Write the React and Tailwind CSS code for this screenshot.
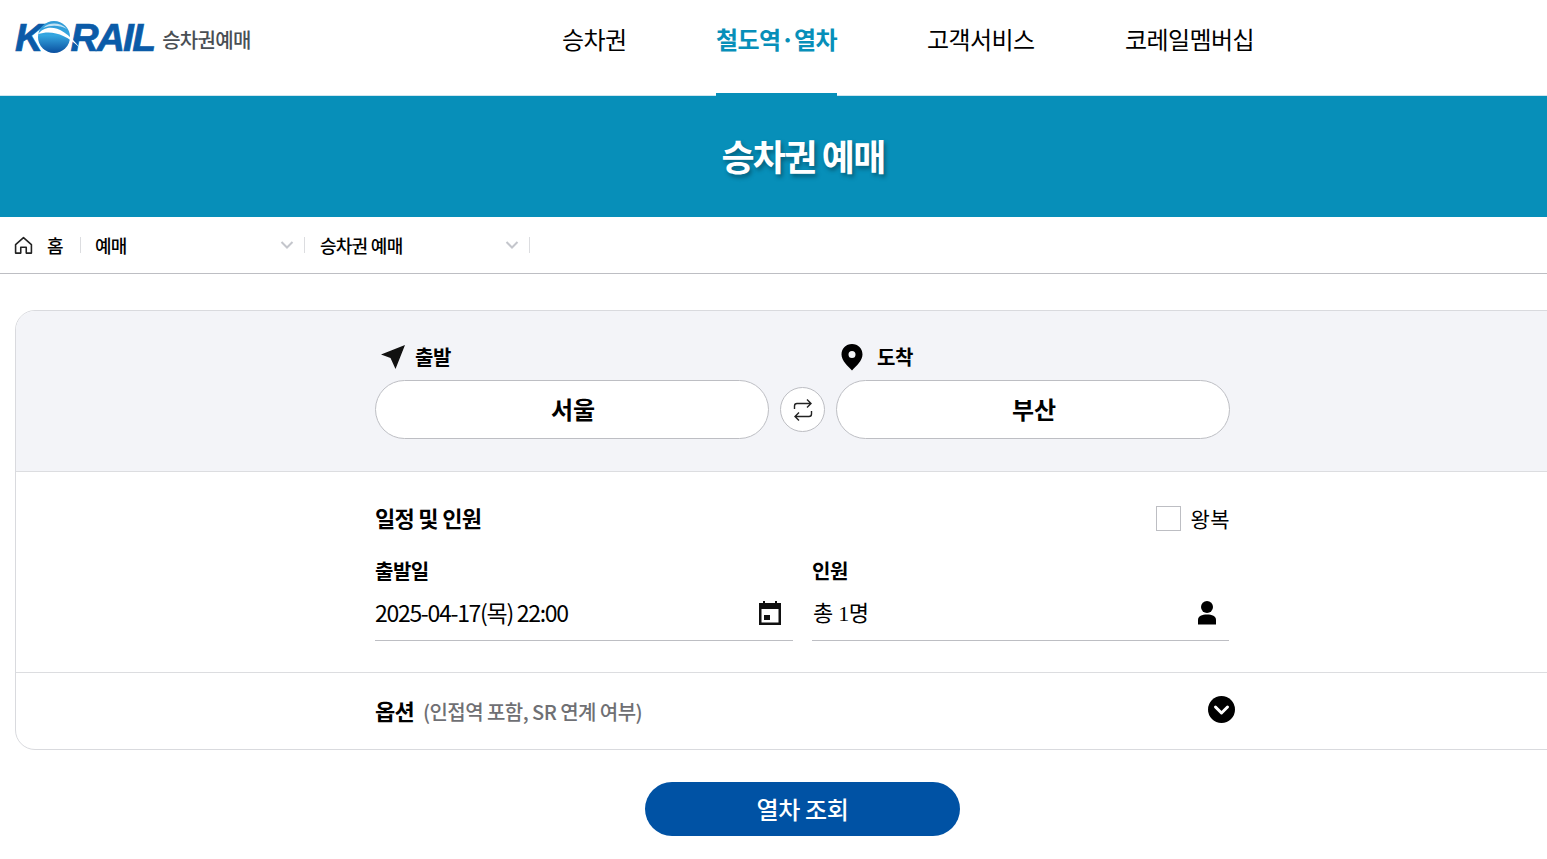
const NAV_ITEMS = [
  { label: "승차권", className: "w-[64px] ml-[1px]" },
  { label: "철도역·열차", className: "w-[121px] ml-[90px] text-[#078fb9] font-bold border-b-[3px] border-[#078fb9]" },
  { label: "고객서비스", className: "w-[109px] ml-[90px]" },
  { label: "코레일멤버십", className: "w-[130px] ml-[89px]" },
];

function Logo() {
  return (
    <div className="flex items-center">
      <div className="flex h-[36px] items-center font-['Liberation_Sans',sans-serif] text-[39px] leading-none font-bold italic tracking-[-1.8px] text-[#0b5ba8] [-webkit-text-stroke:0.7px_#0b5ba8]">
        <span>K</span>
        <svg width="44" height="36" viewBox="0 0 44 36" className="relative z-10 -ml-[4px] -mr-[11px]">
          <defs>
            <linearGradient id="globe" x1="0" y1="0" x2="0" y2="1">
              <stop offset="0" stopColor="#2f9ad6" />
              <stop offset="0.45" stopColor="#35a6e0" />
              <stop offset="1" stopColor="#0a4f9f" />
            </linearGradient>
          </defs>
          <circle cx="17" cy="18" r="16" fill="url(#globe)" />
          <path d="M1 15C9 5 25 5 43 29C28 14 14 11 1 15Z" fill="#ffffff" />
          <path d="M6 9C12 3 23 3 30 10C22 6 14 6 6 9Z" fill="#ffffff" opacity="0.7" />
        </svg>
        <span>RAIL</span>
      </div>
      <span className="ml-[8px] mt-[6px] text-[20px] font-medium tracking-[-0.7px] text-[#4a4f55]">
        승차권예매
      </span>
    </div>
  );
}

function Chevron() {
  return (
    <svg width="14" height="10" viewBox="0 0 14 10">
      <path d="M1.5 2L7 7.5L12.5 2" fill="none" stroke="#c4c6cc" strokeWidth="2" />
    </svg>
  );
}

function HomeIcon() {
  return (
    <svg width="19" height="19" viewBox="0 0 18 18" fill="none" stroke="#222" strokeWidth="1.5" className="-ml-[1px]">
      <path d="M1.5 8.2L9 1.6L16.5 8.2V16.2H11.6V10.6H6.4V16.2H1.5Z" strokeLinejoin="round" />
    </svg>
  );
}

function SwapIcon() {
  return (
    <svg width="20" height="24" viewBox="0 0 20 24" fill="none" stroke="#222" strokeWidth="1.4">
      <path d="M1.5 11V8C1.5 6.5 2.5 5.5 4 5.5H18M14 1.5L18 5.5L14 9.5" />
      <path d="M18.5 13V16C18.5 17.5 17.5 18.5 16 18.5H2M6 14.5L2 18.5L6 22.5" />
    </svg>
  );
}

export default function App() {
  return (
    <div className="h-[859px] w-full overflow-hidden bg-white font-['Noto_Sans_CJK_KR',sans-serif] text-black">
      <div className="w-[1606px]">
        <header className="flex h-[96px] items-start border-b border-[#cfe6ef] pl-[15px]">
          <div className="mt-[19px] w-[546px]">
            <Logo />
          </div>
          <nav className="flex h-[96px] items-start">
            {NAV_ITEMS.map((item) => (
              <a
                key={item.label}
                className={`h-[96px] whitespace-nowrap pt-[20px] text-[24px] leading-[38px] tracking-[-0.6px] ${item.className}`}
              >
                {item.label}
              </a>
            ))}
          </nav>
        </header>

        <div className="flex h-[121px] items-center justify-center bg-[#078fb9]">
          <h1 className="-mt-[4px] text-[36px] font-bold tracking-[-1.8px] text-white [text-shadow:2px_3px_4px_rgba(0,0,0,0.35)]">
            승차권 예매
          </h1>
        </div>

        <div className="flex h-[57px] items-center border-b border-[#bdbec3] pl-[15px] text-[18px] leading-[24px] tracking-[-0.7px]">
          <HomeIcon />
          <span className="ml-[14px] -mt-[1px] font-medium">홈</span>
          <span className="ml-[17px] h-[16px] w-px bg-[#dcdde0]" />
          <span className="ml-[14px] -mt-[1px] w-[185px] font-medium">예매</span>
          <Chevron />
          <span className="ml-[10px] h-[16px] w-px bg-[#dcdde0]" />
          <span className="ml-[15px] -mt-[1px] w-[185px] font-medium">승차권 예매</span>
          <Chevron />
          <span className="ml-[10px] h-[16px] w-px bg-[#dcdde0]" />
        </div>

        <section className="mx-[15px] mt-[36px] overflow-hidden rounded-[20px] border border-[#d9dade]">
          <div className="h-[161px] border-b border-[#dcdde0] bg-[#f3f4f8] pl-[359px]">
            <div className="flex pt-[31px]">
              <div className="flex h-[30px] w-[461px] items-center pl-[5px]">
                <svg width="26" height="26" viewBox="0 0 26 26">
                  <path d="M25 1L1 10.5L10.5 14L15.5 25Z" fill="#111" />
                </svg>
                <span className="ml-[9px] text-[20px] font-bold tracking-[-0.5px]">출발</span>
              </div>
              <div className="flex h-[30px] items-center pl-[5px]">
                <svg width="22" height="28" viewBox="0 0 22 28">
                  <path
                    fillRule="evenodd"
                    d="M11 1C5 1 .5 5.5.5 11.5C.5 18 7 23 11 27.5C15 23 21.5 18 21.5 11.5C21.5 5.5 17 1 11 1ZM11 8A3.5 3.5 0 1 1 11 15A3.5 3.5 0 1 1 11 8Z"
                    fill="#000"
                  />
                </svg>
                <span className="ml-[14px] text-[20px] font-bold tracking-[-0.5px]">도착</span>
              </div>
            </div>
            <div className="mt-[8px] flex items-center">
              <div className="flex h-[59px] w-[394px] items-center justify-center rounded-full border border-[#bdbec3] bg-white pb-[2px] pl-[2px] text-[24px] font-bold tracking-[-0.2px]">
                서울
              </div>
              <div className="ml-[11px] flex h-[45px] w-[45px] items-center justify-center rounded-full border border-[#bdbec3] bg-white">
                <SwapIcon />
              </div>
              <div className="ml-[11px] flex h-[59px] w-[394px] items-center justify-center rounded-full border border-[#bdbec3] bg-white pb-[2px] pl-[2px] text-[24px] font-bold tracking-[-0.2px]">
                부산
              </div>
            </div>
          </div>

          <div className="h-[201px] border-b border-[#dcdde0] pl-[359px] pt-[28px]">
            <div className="flex h-[36px] w-[855px] items-center justify-between">
              <h2 className="-mt-[2px] text-[22px] leading-[36px] font-bold tracking-[-0.7px]">일정 및 인원</h2>
              <label className="flex items-center">
                <span className="h-[25px] w-[25px] border border-[#bdbec3]" />
                <span className="ml-[10px] mt-[1px] text-[21px] tracking-[0.4px]">왕복</span>
              </label>
            </div>
            <div className="mt-[20px] flex w-[855px] gap-[19px]">
              <div className="w-[418px] border-b border-[#bdbec3]">
                <div className="text-[20px] leading-[30px] font-bold tracking-[-0.5px]">출발일</div>
                <div className="mt-[8px] flex h-[46px] items-start justify-between">
                  <span className="text-[23px] leading-[36px] tracking-[-1.3px]">2025-04-17(목) 22:00</span>
                  <svg width="24" height="26" viewBox="0 0 24 26" className="mr-[11px] mt-[6px]">
                    <path
                      fillRule="evenodd"
                      d="M5 1H7V3H17V1H19V3H23V25H1V3H5ZM3.5 9V22.5H20.5V9ZM6 15H12V20H6Z"
                      fill="#111"
                    />
                  </svg>
                </div>
              </div>
              <div className="w-[417px] border-b border-[#bdbec3]">
                <div className="text-[20px] leading-[30px] font-bold tracking-[-0.5px]">인원</div>
                <div className="mt-[8px] flex h-[46px] items-start justify-between">
                  <span className="pl-[1px] pt-[2px] font-['Liberation_Serif','Noto_Sans_CJK_KR',serif] text-[22px] leading-[36px] tracking-[-0.3px]">
                    총 1명
                  </span>
                  <svg width="20" height="26" viewBox="0 0 20 26" className="mr-[12px] mt-[6px]">
                    <circle cx="10" cy="7" r="6" fill="#000" />
                    <path d="M1 24.5V20C1 16 5 14.5 10 14.5S19 16 19 20V24.5Z" fill="#000" />
                  </svg>
                </div>
              </div>
            </div>
          </div>

          <div className="flex h-[76px] items-center pl-[359px]">
            <div className="flex w-[860px] items-center justify-between">
              <div className="-mt-[2px] flex items-baseline">
                <span className="text-[22px] font-bold tracking-[-0.8px]">옵션</span>
                <span className="ml-[9px] text-[20px] font-medium tracking-[-0.55px] text-[#6f7074]">
                  (인접역 포함, SR 연계 여부)
                </span>
              </div>
              <svg width="27" height="27" viewBox="0 0 27 27" className="-mt-[4px]">
                <circle cx="13.5" cy="13.5" r="13.5" fill="#000" />
                <path d="M7.5 11L13.5 17L19.5 11" fill="none" stroke="#fff" strokeWidth="3" strokeLinecap="round" strokeLinejoin="round" />
              </svg>
            </div>
          </div>
        </section>

        <div className="mt-[32px] flex justify-center pr-[1px]">
          <button
            type="button"
            className="h-[54px] w-[315px] rounded-full bg-[#0052a4] pb-[1px] text-[24px] font-medium tracking-[-0.3px] text-white"
          >
            열차 조회
          </button>
        </div>
      </div>
    </div>
  );
}
